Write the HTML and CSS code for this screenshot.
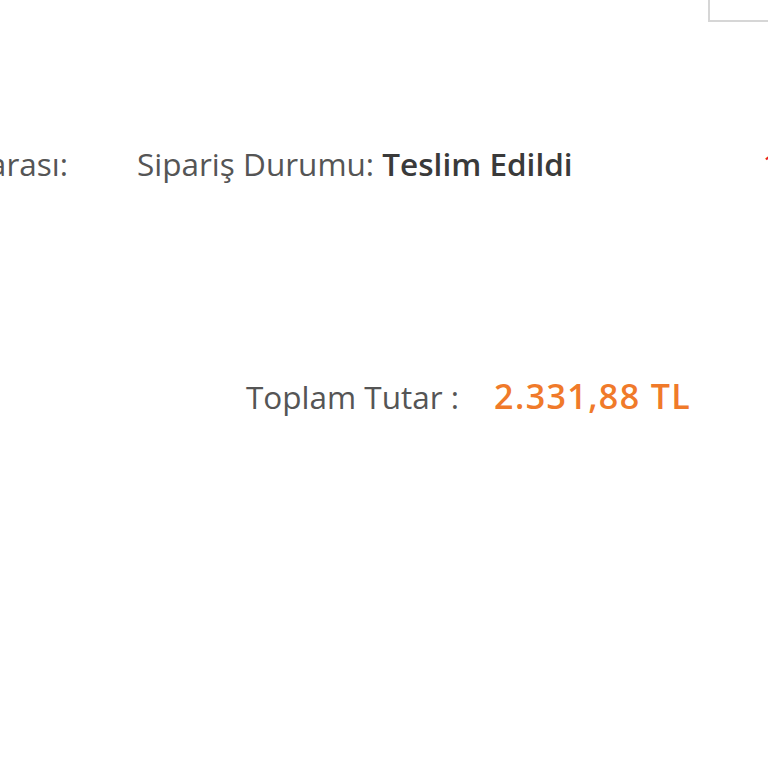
FILE: index.html
```html
<!DOCTYPE html>
<html lang="tr">
<head>
<meta charset="utf-8">
<link rel="stylesheet" href="styles.css">
</head>
<body>
<div class="page">
  <div class="topbar"><div class="box"></div></div>
  <div class="info-row">
    <span class="label order-no">Sipariş Numarası:</span>
    <span class="label status">Sipariş Durumu: <b class="value">Teslim Edildi</b></span>
    <span class="date">12.03.2019</span>
  </div>
  <div class="total-row">
    <span class="total-label">Toplam Tutar :</span>
    <span class="total-value">2.331,88 TL</span>
  </div>
</div>
</body>
</html>
```
FILE: styles.css
```css
html, body {
  margin: 0;
  padding: 0;
  background: #fff;
  overflow: hidden;
}
.page {
  width: 768px;
  height: 768px;
  overflow: hidden;
  font-family: "Open Sans", "DejaVu Sans", sans-serif;
}
.topbar {
  height: 22px;
  display: flex;
  justify-content: flex-end;
}
.box {
  width: 58px;
  height: 20px;
  border-left: 2px solid #d6d6d6;
  border-bottom: 2px solid #d6d6d6;
}
.info-row {
  display: flex;
  align-items: baseline;
  white-space: nowrap;
  margin-top: 120px;
  font-size: 31.5px;
  color: #555;
}
.order-no {
  flex: none;
  width: 360px;
  margin-left: -292px;
  text-align: right;
  margin-right: 69px;
}
.status {
  flex: none;
}
.status .value {
  font-weight: 600;
  color: #3a3a3a;
}
.date {
  margin-left: 190px;
  color: #e8202a;
  flex: none;
}
.total-row {
  display: flex;
  align-items: baseline;
  margin-top: 188px;
  margin-left: 246px;
  white-space: nowrap;
}
.total-label {
  font-size: 31.5px;
  color: #555;
}
.total-value {
  margin-left: 35px;
  font-size: 34px;
  letter-spacing: 1.4px;
  font-weight: 600;
  color: #f07a2a;
}
```
